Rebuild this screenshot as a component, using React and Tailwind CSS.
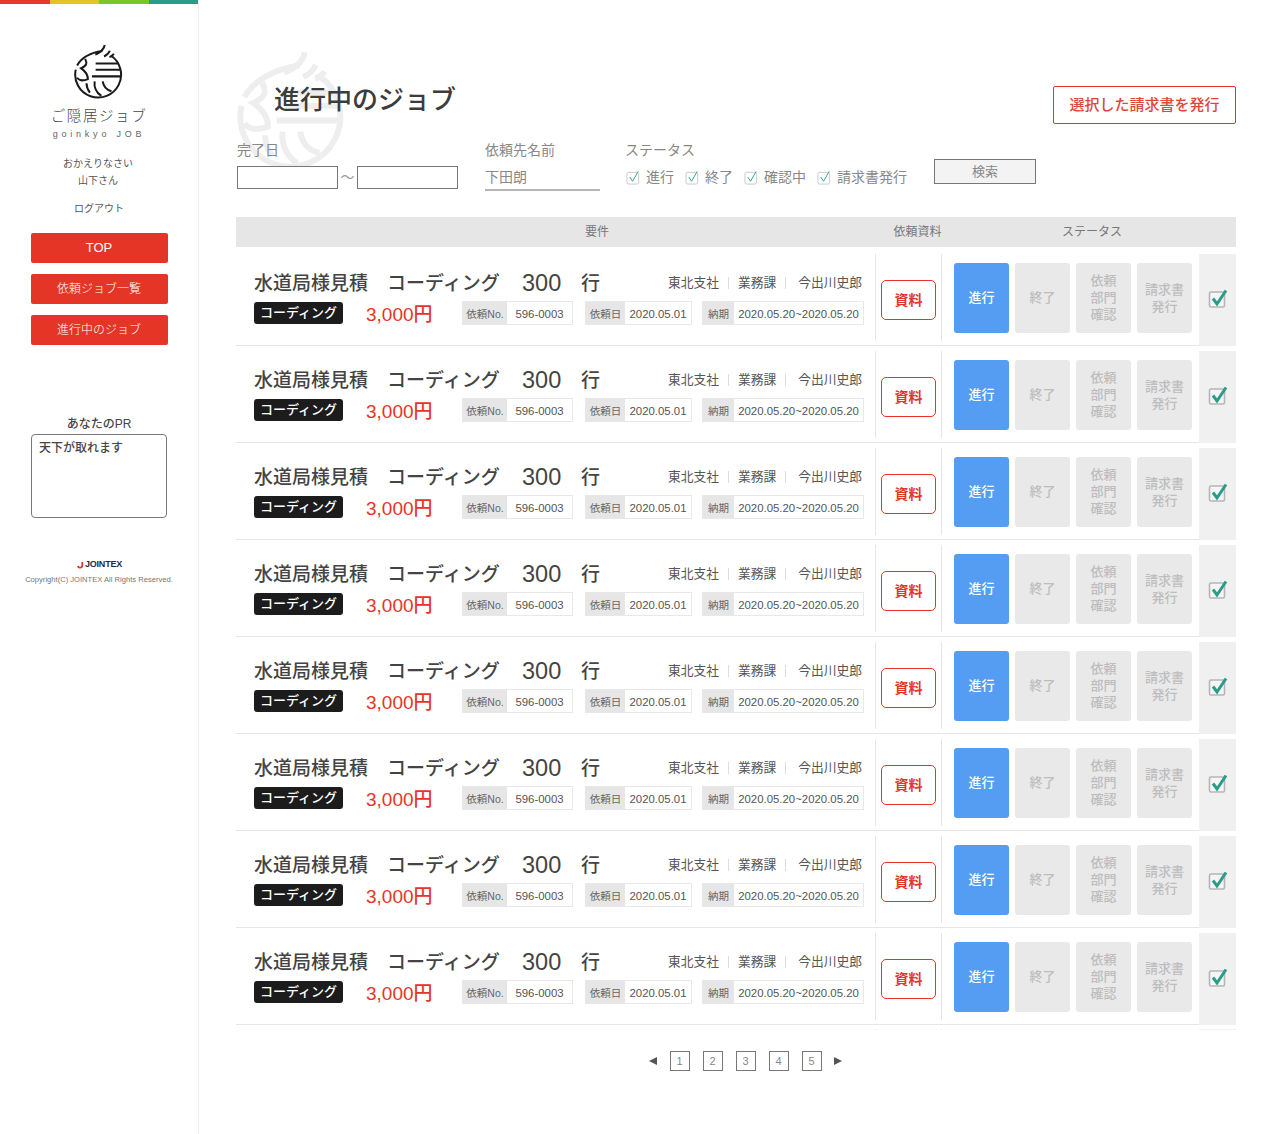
import React from "react";

const FONT = '"Liberation Sans","Noto Sans CJK JP",sans-serif';

function Logo({ className, color, width = 6 }) {
  return (
    <svg viewBox="38 24 148 166" className={className} fill="none" stroke={color} strokeWidth={width} strokeLinecap="butt">
      <path d="M150 58 A68 68 0 1 1 46 100" />
      <path d="M50 88 C62 66 90 50 125 45" />
      <path d="M74 68 C80 80 80 88 62 96 C74 104 82 114 82 128 C68 134 56 132 50 124" />
      <path d="M132 27 C130 38 122 48 104 55" />
      <path d="M147 44 C144 52 138 57 130 61" />
      <path d="M159 53 C156 58 152 61 146 63" />
      <path d="M105 82 H174 M105 100 H178 M94 120 H180" />
      <path d="M78 140 C78 150 82 160 88 168" />
      <path d="M102 135 C100 150 106 168 122 178" />
      <path d="M126 135 C128 150 136 160 152 164" />
    </svg>
  );
}

function Check() {
  return (
    <svg viewBox="0 0 16 16" className="w-[15px] h-[15px] shrink-0 mr-[5px]" fill="none">
      <rect x="1" y="2.5" width="12.5" height="12.5" rx="2" stroke="#c8c8c8" strokeWidth="1" />
      <path d="M4 7.5 L7 12 L13 1.5" stroke="#2a9d8a" strokeWidth="1" />
    </svg>
  );
}

function Chip({ label, value, w, lw, ml }) {
  return (
    <div className={`flex h-[24px] border border-[#e8e8e8] leading-[24px] ${w} ${ml}`}>
      <div className={`bg-[#e6e6e6] text-[#666] text-[10.5px] text-center shrink-0 ${lw}`}>{label}</div>
      <div className="flex-1 text-center text-[11.4px] text-[#555] whitespace-nowrap">{value}</div>
    </div>
  );
}

function StatusBtn({ children, active }) {
  return (
    <div
      className={`w-[55px] h-[70px] rounded-[3px] flex items-center justify-center text-center text-[13px] leading-[17px] font-medium pb-[1px] ${
        active ? "bg-[#549df3] text-white" : "bg-[#e9e9e9] text-[#bdbdbd]"
      }`}
    >
      {children}
    </div>
  );
}

function Row() {
  return (
    <div className="flex h-[92px] mb-[5px]">
      <div className="flex-1 flex border-b border-[#e6e6e6] h-[92px]">
        <div className="w-[639px] pl-[18px] pt-[15px] h-[87px]">
          <div className="flex items-center h-[30px] text-[#444] font-medium whitespace-nowrap">
            <span className="text-[19px] w-[133px]">水道局様見積</span>
            <span className="text-[19px] w-[135px]">コーディング</span>
            <span className="text-[23.5px] w-[59px]">300</span>
            <span className="text-[19px]">行</span>
            <div className="ml-auto pr-[13px] pb-[2px] flex items-center text-[12.75px] font-normal text-[#555]">
              <span>東北支社</span>
              <span className="w-px h-[12px] bg-[#ddd] mx-[9px]" />
              <span>業務課</span>
              <span className="w-px h-[12px] bg-[#ddd] mx-[9px]" />
              <span className="ml-[3px]">今出川史郎</span>
            </div>
          </div>
          <div className="flex items-center h-[26px] mt-[1px] whitespace-nowrap">
            <div className="w-[89px] h-[22px] bg-[#1c1c1c] rounded-[3px] text-white text-[13px] leading-[22px] text-center font-medium">
              コーディング
            </div>
            <div className="w-[96px] h-[26px] ml-[23px] text-[#e63526] text-[19px] font-medium leading-[30px]">3,000円</div>
            <Chip label="依頼No." value="596-0003" w="w-[111px]" lw="w-[44px]" ml="" />
            <Chip label="依頼日" value="2020.05.01" w="w-[107px]" lw="w-[39px]" ml="ml-[12px]" />
            <Chip label="納期" value="2020.05.20~2020.05.20" w="w-[162px]" lw="w-[31px]" ml="ml-[10px]" />
          </div>
        </div>
        <div className="w-[67px] h-[87px] border-x border-[#e6e6e6] flex items-start justify-center pt-[26px]">
          <div className="w-[55px] h-[40px] border border-[#e63526] rounded-[5px] text-[#e63526] text-[14px] font-bold flex items-center justify-center">
            資料
          </div>
        </div>
        <div className="flex-1 pl-[12px] pt-[9px] flex gap-[6px]">
          <StatusBtn active>進行</StatusBtn>
          <StatusBtn>終了</StatusBtn>
          <StatusBtn>
            依頼
            <br />
            部門
            <br />
            確認
          </StatusBtn>
          <StatusBtn>
            請求書
            <br />
            発行
          </StatusBtn>
        </div>
      </div>
      <div className="w-[37px] bg-[#f0f0f0] flex items-center justify-center pb-[3px]">
        <svg viewBox="0 0 20 20" className="w-[20px] h-[20px]" fill="none">
          <rect x="1.5" y="3" width="15" height="15" rx="1.5" fill="#f5f5f5" stroke="#b5b5b5" strokeWidth="1.6" />
          <path d="M5 9.5 L9 15 L18 1.5" stroke="#2a9d8a" strokeWidth="3" />
        </svg>
      </div>
    </div>
  );
}

function NavBtn({ children, top }) {
  return (
    <div className={`w-[137px] h-[30px] mx-auto rounded-[2px] bg-[#e53527] text-white font-light flex items-center justify-center ${top}`}>
      {children}
    </div>
  );
}

export default function App() {
  return (
    <div className="relative flex w-[1280px] h-[1134px] bg-white overflow-hidden" style={{ fontFamily: FONT }}>
      <aside className="w-[199px] shrink-0 border-r border-[#efefef] text-center">
        <div className="flex h-[4px]">
          <div className="w-[50px] bg-[#e8392a]" />
          <div className="w-[49px] bg-[#e0c52a]" />
          <div className="w-[50px] bg-[#7ac52a]" />
          <div className="w-[49px] bg-[#2a9d8a]" />
        </div>
        <div className="flex justify-center pt-[40px] pr-[2px]">
          <Logo className="w-[50px] h-[56px]" color="#1a1a1a" />
        </div>
        <div className="mt-[6px] text-[14.5px] leading-[20px] tracking-[0.11em] text-[#444] font-light">ご隠居ジョブ</div>
        <div className="mt-[1px] text-[9px] leading-[14px] tracking-[0.42em] text-[#666]">goinkyo JOB</div>
        <div className="mt-[14px] pr-[2px] text-[10px] leading-[17px] text-[#555]">
          おかえりなさい
          <br />
          山下さん
        </div>
        <div className="mt-[11px] text-[10px] leading-[17px] text-[#555]">ログアウト</div>
        <NavBtn top="mt-[16px] text-[13px]">TOP</NavBtn>
        <NavBtn top="mt-[11px] text-[12px]">依頼ジョブ一覧</NavBtn>
        <NavBtn top="mt-[11px] text-[12px]">進行中のジョブ</NavBtn>
        <div className="mt-[71px] text-[12px] leading-[16px] text-[#444] font-medium">あなたのPR</div>
        <div className="ml-[31px] mt-[2px] w-[136px] h-[84px] border border-[#777] rounded-[4px] text-left pl-[7px] pt-[5px] text-[12px] leading-[16px] text-[#444] font-medium">
          天下が取れます
        </div>
        <div className="mt-[40px] pl-[1px] flex items-center justify-center h-[14px]">
          <svg viewBox="0 0 8 8" className="w-[7px] h-[8px] mr-px" fill="none">
            <path d="M6 0.5 V4 A2.5 2.5 0 0 1 1 5" stroke="#e63526" strokeWidth="2" />
          </svg>
          <span className="text-[9px] font-bold text-[#1c2b4a] tracking-[-0.02em]">JOINTEX</span>
        </div>
        <div className="mt-[2px] text-[7.6px] leading-[12px] text-[#777] whitespace-nowrap">
          Copyright(C) JOINTEX All Rights Reserved.
        </div>
      </aside>

      <main className="relative w-[1000px] ml-[37px] pt-[86px]">
        <Logo className="absolute left-[-3px] top-[50px] w-[114px] h-[122px]" color="#eeeeee" width={8} />
        <div className="relative flex justify-between h-[38px]">
          <h1 className="ml-[38px] text-[26px] leading-[26px] pt-[1px] font-medium text-[#3c3c3c]">進行中のジョブ</h1>
          <div className="w-[183px] h-[38px] border border-[#e63526] rounded-[2px] text-[#e0463a] text-[15px] font-medium flex items-center justify-center">
            選択した請求書を発行
          </div>
        </div>
        <div className="relative flex mt-[17px] h-[76px] text-[#888] text-[14px]">
          <div className="ml-px w-[248px]">
            <div className="leading-[17px] mt-[1px]">完了日</div>
            <div className="flex items-center mt-[7px]">
              <div className="w-[101px] h-[23px] border border-[#777] bg-white" />
              <span className="w-[19px] text-center text-[#999]">〜</span>
              <div className="w-[101px] h-[23px] border border-[#777] bg-white" />
            </div>
          </div>
          <div className="w-[115px]">
            <div className="leading-[17px] mt-[1px]">依頼先名前</div>
            <div className="mt-[7px] h-[25px] leading-[22px] border-b-2 border-[#b5b5b5]">下田朗</div>
          </div>
          <div className="ml-[25px] w-[309px]">
            <div className="leading-[17px] mt-[1px]">ステータス</div>
            <div className="flex items-center mt-[10px] ml-[1px] leading-[17px] whitespace-nowrap">
              <Check />
              <span className="w-[39px]">進行</span>
              <Check />
              <span className="w-[39px]">終了</span>
              <Check />
              <span className="w-[53px]">確認中</span>
              <Check />
              <span>請求書発行</span>
            </div>
          </div>
          <div className="w-[102px] h-[25px] mt-[18px] border border-[#777] bg-[#f3f3f3] text-[13px] text-center leading-[23px]">検索</div>
        </div>
        <div className="relative flex h-[30px] bg-[#e6e6e6] text-[12px] text-[#777] leading-[31px]">
          <div className="w-[639px] pl-[83px] text-center">要件</div>
          <div className="w-[67px] text-center pl-[18px] whitespace-nowrap">依頼資料</div>
          <div className="ml-[41px] w-[218px] text-center">ステータス</div>
        </div>
        <div className="mt-[7px]">
          {Array.from({ length: 8 }).map((_, i) => (
            <Row key={i} />
          ))}
        </div>
        <div className="flex h-[1px] -mt-px">
          <div className="w-[639px]" />
          <div className="w-[67px] border-x border-[#e6e6e6]" />
          <div className="flex-1" />
          <div className="w-[37px] bg-[#f0f0f0]" />
        </div>
        <div className="flex items-center justify-center mt-[21px] ml-[18px] text-[11px] text-[#888] gap-[13px]">
          <div className="w-0 h-0 border-y-[4.5px] border-y-transparent border-r-[8px] border-r-[#555]" />
          {[1, 2, 3, 4, 5].map((n) => (
            <div key={n} className="w-[20px] h-[20px] border border-[#777] text-center leading-[18px]">
              {n}
            </div>
          ))}
          <div className="w-0 h-0 -ml-px border-y-[4.5px] border-y-transparent border-l-[8px] border-l-[#555]" />
        </div>
      </main>
    </div>
  );
}
